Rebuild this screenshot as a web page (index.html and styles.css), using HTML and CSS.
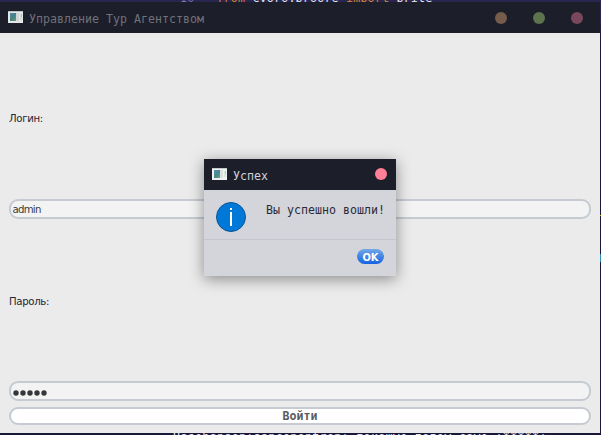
FILE: index.html
```html
<!DOCTYPE html>
<html lang="ru">
<head>
<meta charset="utf-8">
<title>Управление Тур Агентством</title>
<link rel="stylesheet" href="styles.css">
</head>
<body>
<div class="desktop">
  <div class="code code-top"><span class="num">10</span><span class="kw from">from</span> <span>cyoro.broore</span> <span class="kw imp">import</span> <span class="name">brite</span></div>
  <div class="code code-bottom">Ussehanson:sanconentron: покошмо потом само :*****:</div>
  <i class="edge edge-yellow"></i><i class="edge edge-cyan"></i>
  <main class="window">
    <header class="titlebar">
      <svg class="app-icon" viewBox="0 0 15 12"><defs><linearGradient id="pic" x2="1" y2="1"><stop offset="0" stop-color="#5b8cb0"/><stop offset=".5" stop-color="#46888c"/><stop offset="1" stop-color="#6ba473"/></linearGradient></defs><path fill="#f0f1f2" d="M0 0h15v12H0z"/><path fill="#c3c8cb" d="M0 0h15v1H0z"/><path fill="url(#pic)" d="M2 2h6v8H2z"/><path fill="#dcdfe0" d="M8 2h3v8H8z"/><path fill="#d5e9de" d="M12 3h2v6h-2z"/><path fill="#a9cfc4" d="M13 3h1v3h-1z"/></svg>
      <h1 class="title">Управление Тур Агентством</h1>
      <div class="controls"><i class="dot min"></i><i class="dot max"></i><i class="dot close"></i></div>
    </header>
    <form class="form">
      <label class="label login-label" for="login">Логин:</label>
      <div class="field" id="login">admin</div>
      <label class="label" for="password">Пароль:</label>
      <div class="field" id="password"><svg class="mask" viewBox="0 0 35 6"><g fill="#343638"><circle cx="3" cy="3" r="2.7"/><circle cx="10" cy="3" r="2.7"/><circle cx="17" cy="3" r="2.7"/><circle cx="24" cy="3" r="2.7"/><circle cx="31" cy="3" r="2.7"/></g></svg></div>
      <button class="submit" type="button">Войти</button>
    </form>
  </main>
  <section class="dialog" role="dialog">
    <header class="dialog-bar">
      <svg class="app-icon" viewBox="0 0 15 12"><path fill="#f0f1f2" d="M0 0h15v12H0z"/><path fill="#c3c8cb" d="M0 0h15v1H0z"/><path fill="url(#pic)" d="M2 2h6v8H2z"/><path fill="#dcdfe0" d="M8 2h3v8H8z"/><path fill="#d5e9de" d="M12 3h2v6h-2z"/><path fill="#a9cfc4" d="M13 3h1v3h-1z"/></svg>
      <h2 class="title">Успех</h2><i class="dot"></i>
    </header>
    <div class="message">
      <svg class="info" viewBox="0 0 30 30"><circle cx="15" cy="15" r="14.5" fill="#0078d7" stroke="#0c5594"/><path fill="#fff" d="M14 6h2v2h-2zM14 10h2v14h-2z"/></svg>
      <p class="text">Вы успешно вошли!</p>
    </div>
    <footer class="actions"><button class="ok" type="button">OK</button></footer>
  </section>
</div>
</body>
</html>
```
FILE: styles.css
```css
* { box-sizing: border-box; }
body { margin: 0; }
.desktop {
  position: relative;
  width: 601px;
  height: 435px;
  overflow: hidden;
  padding-top: 2px;
  background: linear-gradient(#28254f 0 20px, #1a1838 40px);
  font-family: "DejaVu Sans Mono", monospace;
}
.code {
  position: absolute;
  font-size: 11.63px;
  line-height: 14px;
  color: #e4e5ee;
  white-space: pre;
}
.code-top { left: 180px; top: -9px; letter-spacing: .2px; }
.code-top .num { color: #7874b0; margin-right: 22px; }
.kw { color: #d0842c; }
.code-bottom { left: 173px; top: 430px; letter-spacing: .33px; }
.edge { position: absolute; left: 600px; width: 1px; }
.edge-yellow { top: 215px; height: 1px; background: #c8bd20; }
.edge-cyan { top: 254px; height: 8px; background: #2f8faf; }
.window {
  position: relative;
  display: flex;
  flex-direction: column;
  width: 600px;
  height: 431px;
  background: #ebebeb;
}
.titlebar {
  display: flex;
  align-items: center;
  height: 31px;
  padding: 0 17px 0 8px;
  background: #1c1e2a;
  color: #70717a;
}
.app-icon { width: 15px; height: 12px; flex: none; margin-top: -2px; }
.titlebar .app-icon { opacity: .95; }
.title { margin: 3px 0 0 6px; font-size: 11.63px; line-height: 14px; font-weight: 400; }
.controls { display: flex; gap: 26px; margin-left: auto; }
.dot { width: 12px; height: 12px; border-radius: 50%; }
.min { background: #755c4b; }
.max { background: #5c734e; }
.close { background: #7a485c; }
.form {
  flex: 1;
  display: grid;
  grid-template-rows: 166px 20px 162px 20px 18px;
  row-gap: 0;
  padding: 0 9px;
}
.label {
  align-self: center;
  padding-top: 4px;
  font: 11.3px/14px "DejaVu Sans Condensed", "DejaVu Sans", sans-serif;
  letter-spacing: -.35px;
  color: #242635;
}
.login-label { padding-top: 6px; }
.field {
  display: flex;
  align-items: center;
  padding: 2px 0 0 1.5px;
  border: 2px solid #c5cbd1;
  border-radius: 9px;
  background: #f3f3f3;
  font: 11.3px/14px "DejaVu Sans Condensed", "DejaVu Sans", sans-serif;
  letter-spacing: -.75px;
  color: #3a3b40;
}
.mask { width: 35px; height: 6px; margin: 2px 0 0 .5px; }
.submit {
  margin: 6px 0 -6px;
  padding: 0;
  border: 2px solid #c5cbd1;
  border-radius: 9px;
  background: #fff;
  font: bold 11.63px/14px "DejaVu Sans Mono", monospace;
  color: #5b5c60;
}
.dialog {
  position: absolute;
  left: 204px;
  top: 159px;
  width: 192px;
  height: 117px;
  background: #d4d5db;
  box-shadow: 0 3px 14px rgba(0, 0, 0, .42);
}
.dialog-bar {
  display: flex;
  align-items: center;
  height: 31px;
  padding: 0 9px 0 8px;
  background: #1c1e2a;
  color: #d0d2da;
}
.dialog-bar .dot { margin: -1px 0 0 auto; background: #ff8096; }
.message {
  display: flex;
  height: 50px;
  padding: 12px 0 0 12px;
  border-bottom: 1px solid #c5c6cd;
}
.info { width: 30px; height: 30px; flex: none; }
.text { margin: 1px 0 0 20px; font-size: 11.63px; line-height: 14px; color: #292b38; white-space: nowrap; }
.actions { display: flex; justify-content: flex-end; padding: 9px 12px; }
.ok {
  width: 27px;
  height: 15px;
  padding: 2px 0 0;
  border: 0;
  border-radius: 7.5px;
  background: linear-gradient(#72a8e6, #1663e0);
  font: bold 11px/13px "DejaVu Sans Condensed", "DejaVu Sans", sans-serif;
  color: #fff;
}
```
